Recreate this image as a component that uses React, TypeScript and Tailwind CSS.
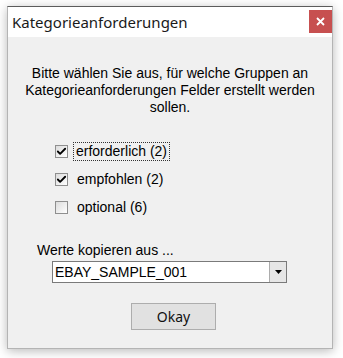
import { Check } from "lucide-react";

type OptionRowProps = {
  label: string;
  checked: boolean;
  focused?: boolean;
};

function OptionRow({ label, checked, focused }: OptionRowProps) {
  return (
    <div className="flex items-center h-[28px] pl-[47px]">
      <div className="w-[13px] h-[13px] border border-[#8f8f8f] bg-gradient-to-br from-[#dcdcdc] to-white flex items-center justify-center">
        {checked && <Check className="w-[11px] h-[11px] text-black" strokeWidth={4} />}
      </div>
      <span
        className={
          focused
            ? "ml-[5px] px-[2px] leading-[17px] border border-dotted border-[#333]"
            : "ml-[6px] px-[2px] leading-[17px] border border-transparent"
        }
      >
        {label}
      </span>
    </div>
  );
}

export default function App() {
  return (
    <div className="w-[343px] h-[358px] bg-white pt-[6px] pl-[7px] font-['Liberation_Sans',Arial,sans-serif] text-[14px] text-black">
      <div className="w-[326px] h-[343px] flex flex-col bg-[#f0f0f0] border border-[#b4b4b4] border-t-[#5c5c5c] shadow-[0_2px_10px_rgba(0,0,0,0.28)]">
        <div className="h-[30px] bg-white flex items-start justify-between">
          <span className="mt-[6px] ml-[4px] text-[15px] leading-[18px] text-[#1a1a1a] font-['Noto_Sans','Open_Sans',sans-serif]">
            Kategorieanforderungen
          </span>
          <button className="mt-[3px] w-[23px] h-[23px] bg-[#c75050] flex items-center justify-center">
            <svg width="9" height="9" viewBox="0 0 9 9">
              <path d="M1 1 L8 8 M8 1 L1 8" stroke="white" strokeWidth="1.8" />
            </svg>
          </button>
        </div>

        <p className="mt-[28px] text-center leading-[17px]">
          Bitte wählen Sie aus, für welche Gruppen an
          <br />
          Kategorieanforderungen Felder erstellt werden
          <br />
          sollen.
        </p>

        <div className="mt-[21px] flex flex-col">
          <OptionRow label="erforderlich (2)" checked focused />
          <OptionRow label="empfohlen (2)" checked />
          <OptionRow label="optional (6)" checked={false} />
        </div>

        <div className="mt-[21px] pl-[29px] leading-[17px]">Werte kopieren aus ...</div>

        <div className="mt-[2px] ml-[44px] w-[235px] h-[22px] flex bg-white border border-[#7a7a7a]">
          <div className="flex-1 flex items-center pl-[2px]">EBAY_SAMPLE_001</div>
          <div className="w-[17px] h-full bg-[#e6e6e6] border-l border-[#acacac] flex items-center justify-center">
            <svg width="7" height="4" viewBox="0 0 7 4">
              <path d="M0 0 H7 L3.5 4 Z" fill="black" />
            </svg>
          </div>
        </div>

        <div className="mt-[20px] ml-[123px]">
          <button className="w-[85px] h-[27px] bg-[#e1e1e1] border border-[#adadad] text-[14px] text-[#111] font-['Noto_Sans',sans-serif]">
            Okay
          </button>
        </div>
      </div>
    </div>
  );
}
